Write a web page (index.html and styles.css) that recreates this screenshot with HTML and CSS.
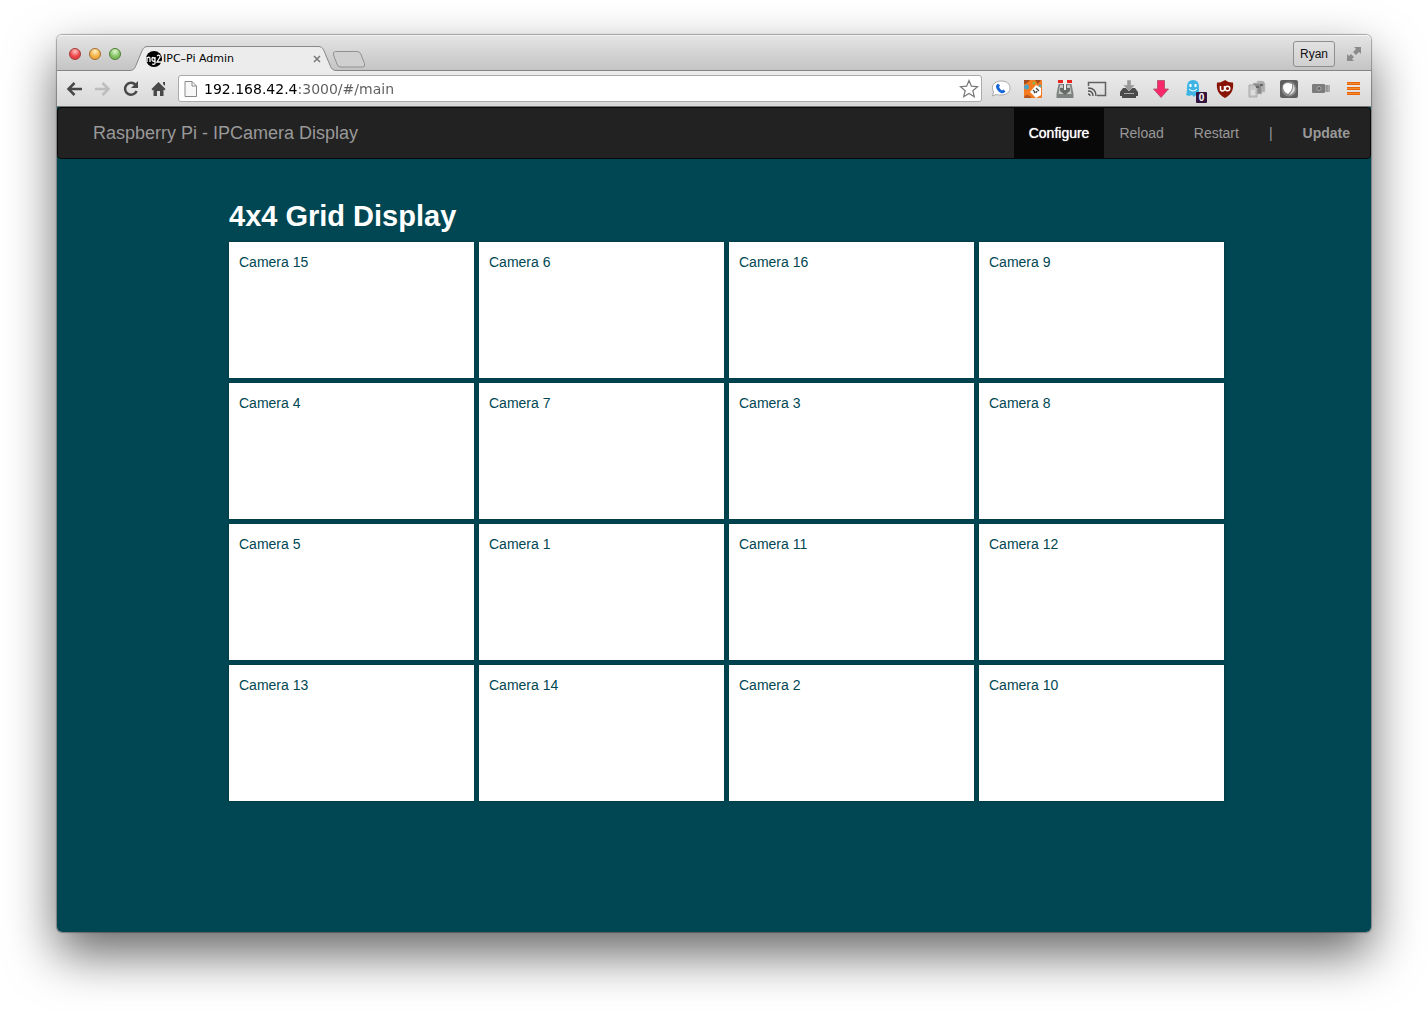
FILE: index.html
```html
<!DOCTYPE html>
<html lang="en">
<head>
<meta charset="utf-8">
<title>IPC-Pi Admin</title>
<link rel="stylesheet" href="styles.css">
</head>
<body>
<div class="window">
  <header class="titlebar">
    <div class="lights">
      <button class="light red" aria-label="Close"></button>
      <button class="light amber" aria-label="Minimize"></button>
      <button class="light green" aria-label="Zoom"></button>
    </div>
    <div class="tab">
      <svg class="tab-shape" viewBox="0 0 206 26" preserveAspectRatio="none" aria-hidden="true">
        <path d="M0 25.500C4 25 5 23 6 20L12 5C13.500 1.500 15 .5 18 .5H188C191 .5 192.500 1.500 194 5L200 20C201 23 202 25 206 25.500V26H0Z" fill="#ececec"/>
        <path d="M0 25.500C4 25 5 23 6 20L12 5C13.500 1.500 15 .5 18 .5H188C191 .5 192.500 1.500 194 5L200 20C201 23 202 25 206 25.500" fill="none" stroke="#858585"/>
      </svg>
      <svg class="favicon" viewBox="0 0 18 16" aria-hidden="true">
        <circle cx="9" cy="8" r="8"/>
        <path d="M2 11V6M2 7q3-2 3 1v3M10 6v6q0 2-3 1M10 8q-3-3-3 0t3 2M12 5q3-2 3 1l-3 5h5" fill="none" stroke="#fff" stroke-width="1.300"/>
      </svg>
      <span class="tab-title">IPC–Pi Admin</span>
      <button class="icon-button tab-close" aria-label="Close tab">
        <svg width="8" height="8" viewBox="0 0 8 8"><path d="M1 1l6 6M7 1L1 7" stroke="#777" stroke-width="1.500"/></svg>
      </button>
    </div>
    <button class="icon-button new-tab" aria-label="New tab">
      <svg width="34" height="17" viewBox="0 0 34 17"><path d="M3.500.5H25q3 0 4 3l3.500 9q1 3.500-2 3.500H9q-3 0-4-3L1.500 4q-1-3.500 2-3.500z" fill="#d0d0d0" stroke="#919191"/></svg>
    </button>
    <button class="profile">Ryan</button>
    <button class="icon-button" aria-label="Full screen">
      <svg width="16" height="16" viewBox="0 0 16 16"><path d="M8 1h7v7l-2-2-3 3-3-3 3-3zM1 8l2 2 2-2 3 3-2 2 2 2H1z" fill="#8b8b8b"/></svg>
    </button>
  </header>

  <div class="toolbar">
    <div class="controls">
      <button class="icon-button" aria-label="Back"><svg class="icon" viewBox="0 0 20 20"><path d="M17 10H4M9.500 4L3.500 10l6 6" fill="none" stroke="#484848" stroke-width="2.500"/></svg></button>
      <button class="icon-button" aria-label="Forward"><svg class="icon" viewBox="0 0 20 20"><path d="M2 10h13M9.500 4l6 6-6 6" fill="none" stroke="#bdbdbd" stroke-width="2.500"/></svg></button>
      <button class="icon-button" aria-label="Reload"><svg class="icon" viewBox="0 0 20 20"><path d="M14.500 5.700A6 6 0 1 0 15.600 12" fill="none" stroke="#484848" stroke-width="2.500"/><path d="M17 2v7h-7z" fill="#484848"/></svg></button>
      <button class="icon-button" aria-label="Home"><svg class="icon" viewBox="0 0 20 20"><path d="M9.500 3l7 7-1 1.500-1-1V17H11v-5H8v5H4.500v-6.500l-1 1L2.500 10zM14 3h2v4l-2-2z" fill="#484848"/></svg></button>
    </div>
    <form class="omnibox">
      <svg width="13" height="16" viewBox="0 0 13 16" aria-hidden="true"><path d="M1 .5h7l4.500 4.500v10.500H1zM8 .5V5h4.500" fill="#f8f8f8" stroke="#8a8a8a"/></svg>
      <input class="address" type="text" aria-label="Address" value="192.168.42.4:3000/#/main">
      <button class="icon-button" type="button" aria-label="Bookmark this page"><svg class="icon" viewBox="0 0 20 20"><path d="M10 1.500l2.400 5.700 6.100.5-4.700 4 1.500 6-5.300-3.200-5.300 3.200 1.500-6-4.700-4 6.100-.5z" fill="#fff" stroke="#777" stroke-width="1.200"/></svg></button>
    </form>
    <div class="extensions">
      <button class="icon-button" aria-label="Voice"><svg class="icon" viewBox="0 0 20 20"><path d="M10 2c6 0 9 3 9 7s-3 7-9 7c-2 0-4 0-5-.5L1.500 17 2.500 13C-.5 7 3 2 10 2z" fill="#fff" stroke="#aaa"/><path d="M7 4.500l2 2-1 1.500q1 2.500 3 3.500l1.500-1 2 2q-2 2.500-4.500 1.500-4-2-5-6-.5-2 2-3.500z" fill="#1766d8"/></svg></button>
      <button class="icon-button" aria-label="Tag tool"><svg class="icon" viewBox="0 0 20 20"><rect x="1" y="1" width="18" height="18" rx="1" fill="#f47b20"/><path d="M1 1h6Q4 5 1 5zM12 1h6l-3 4z" fill="#a54c19"/><circle cx="3.500" cy="8" r="2.500" fill="#4aa3c8"/><circle cx="11" cy="4" r="1.500" fill="#85b94b"/><circle cx="17" cy="7" r="1.500" fill="#5aa6b5"/><path d="M7 13l6-7 5 3v7l-5 3z" fill="#fff"/><path d="M10 11l2 2-1 1M13 9l3 3M14 12l-1 2" fill="none" stroke="#444" stroke-width="1.200"/><path d="M1 19q1-5 6-2l2 2z" fill="#b9561d"/></svg></button>
      <button class="icon-button" aria-label="Press"><svg class="icon" viewBox="0 0 20 20"><path d="M3.500 5h13l2 10v4h-17v-4z" fill="#7f837f"/><path d="M5 6h10l1.500 9h-13z" fill="#c4c7c4"/><path d="M8 4h4v5h3v3l-5 4-5-4V9h3z" fill="#686c68"/><path d="M9 5h2v6H9z" fill="#eee"/><path d="M3 1h5v3H3zM12 1h5v3h-5z" fill="#e8241d"/><path d="M8 1h4v4H8z" fill="#eee"/></svg></button>
      <button class="icon-button" aria-label="Cast"><svg class="icon" viewBox="0 0 20 20"><path d="M1.500 7V3.500h17v13H10" fill="none" stroke="#626262" stroke-width="1.500"/><path d="M1 9q8 0 8 8M1 12q5 0 5 5M1 15q2 0 2 2" fill="none" stroke="#555" stroke-width="1.400"/></svg></button>
      <button class="icon-button" aria-label="Downloads"><svg class="icon" viewBox="0 0 20 20"><path d="M4 9h12l3 4v4h-2v2H3v-2H1v-4z" fill="#4b4b4b"/><path d="M5 14h10v1H5z" fill="#aaa"/><path d="M8 1h4v5h4l-6 6-6-6h4z" fill="#999" stroke="#ddd" stroke-width=".5"/></svg></button>
      <button class="icon-button" aria-label="Download"><svg class="icon" viewBox="0 0 20 20"><path d="M6.500 1.500h7V10h4L10 18.500 2.500 10h4z" fill="#f8286a" stroke="#a84b62" stroke-width=".8"/></svg></button>
      <button class="icon-button ghost" aria-label="Trackers blocked: 0"><svg class="icon" viewBox="0 0 20 20"><path d="M4 8q0-7 6-7t6 7v10l-3-2-2 2-2-2-3 1-3-1q1-2 1-8z" fill="#3fb5e6"/><path d="M7.500 5v3M12.500 5v3" stroke="#fff" stroke-width="2"/><path d="M6 10q4 4 8 0" fill="none" stroke="#fff"/></svg><span class="badge">0</span></button>
      <button class="icon-button" aria-label="Shield"><svg class="icon" viewBox="0 0 20 20"><path d="M10 1q4 3 8 2.500c1 8-2 12-8 15.500C4 15.500 1 11.500 2 3.500 6 4 10 1 10 1z" fill="#881405"/><path d="M5.500 7v3q0 2 2 2t2-2V7" fill="none" stroke="#fff" stroke-width="1.500"/><circle cx="12.500" cy="9.500" r="2.300" fill="none" stroke="#fff" stroke-width="1.500"/></svg></button>
      <button class="icon-button" aria-label="Copies"><svg class="icon" viewBox="0 0 20 20"><path d="M10 2h6l2 2v9h-8z" fill="#a9a9a9" stroke="#c8c8c8" stroke-width=".7"/><path d="M6 4h6l3 3v8H6z" fill="#8c8c8c" stroke="#ccc" stroke-width=".7"/><path d="M2 6h5l3 3v9H2z" fill="#c7c7c7" stroke="#aaa"/><path d="M4 11h4v5H4z" fill="#ddd"/><path d="M9 7h3v2H9zM13 5h3v2h-3z" fill="#666"/></svg></button>
      <button class="icon-button" aria-label="Lens"><svg class="icon" viewBox="0 0 20 20"><rect x="1" y="1" width="18" height="18" rx="2" fill="#606060"/><circle cx="10" cy="10" r="7.500" fill="#888"/><path d="M4 7q1-3 5-3l4 1q1 6-4 10-5-2-5-8z" fill="#fff"/><path d="M14 5q5 8-4 11 5-5 4-11z" fill="#ddd"/></svg></button>
      <button class="icon-button" aria-label="Camera"><svg class="icon" viewBox="0 0 20 20"><rect x="1" y="5" width="13" height="9" rx="1" fill="#7c7c7c"/><path d="M14 6h5v7h-5z" fill="#aaa"/><circle cx="8" cy="9.500" r="2" fill="#666" stroke="#aaa"/><path d="M16 6v7" stroke="#888"/></svg></button>
      <button class="icon-button" aria-label="Menu"><svg class="icon" viewBox="0 0 20 20"><path d="M4 4.500h13M4 9.500h13M4 14.500h13" stroke="#e8630a" stroke-width="3"/><path d="M4 4.500h13M4 9.500h13M4 14.500h13" stroke="#f58a28"/></svg></button>
    </div>
  </div>

  <div class="page">
    <nav class="navbar">
      <a class="brand" href="#/main">Raspberry Pi - IPCamera Display</a>
      <div class="links">
        <a class="link active" href="#/configure">Configure</a>
        <a class="link" href="#/reload">Reload</a>
        <a class="link" href="#/restart">Restart</a>
        <span class="link">|</span>
        <a class="link strong" href="#/update">Update</a>
      </div>
    </nav>
    <main class="content">
      <h1 class="heading">4x4 Grid Display</h1>
      <ul class="grid">
        <li class="camera">Camera 15</li><li class="camera">Camera 6</li><li class="camera">Camera 16</li><li class="camera">Camera 9</li>
        <li class="camera">Camera 4</li><li class="camera">Camera 7</li><li class="camera">Camera 3</li><li class="camera">Camera 8</li>
        <li class="camera">Camera 5</li><li class="camera">Camera 1</li><li class="camera">Camera 11</li><li class="camera">Camera 12</li>
        <li class="camera">Camera 13</li><li class="camera">Camera 14</li><li class="camera">Camera 2</li><li class="camera">Camera 10</li>
      </ul>
    </main>
  </div>
</div>
</body>
</html>
```

FILE: styles.css
```css
* { box-sizing: border-box; }

body {
  margin: 0;
  min-height: 100vh;
  padding: 35px 57px 79px;
  display: flex;
  background: #fff;
  font: 14px/20px "Liberation Sans", Arial, sans-serif;
}

button { font: inherit; }

.window {
  flex: 1;
  min-width: 0;
  display: flex;
  flex-direction: column;
  border-radius: 5px;
  box-shadow: 0 0 1px 1px rgba(0, 0, 0, .3), 0 22px 50px rgba(0, 0, 0, .6);
}

.icon-button {
  display: flex;
  padding: 0;
  border: 0;
  background: none;
}

.icon { width: 20px; height: 20px; }

/* Title bar */
.titlebar {
  height: 36px;
  display: flex;
  align-items: center;
  padding: 2px 9px 0 12px;
  border-top: 1px solid #f4f4f4;
  border-bottom: 1px solid #858585;
  border-radius: 5px 5px 0 0;
  background: linear-gradient(#e4e4e4, #c4c4c4);
}

.lights { display: flex; gap: 8px; }

.light {
  width: 12px;
  height: 12px;
  padding: 0;
  border: 1px solid;
  border-radius: 50%;
}

.red { border-color: #a33a38; background: radial-gradient(circle at 50% 25%, #ffc5c2, #ee484b 55%, #d9343a); }
.amber { border-color: #a56a2b; background: radial-gradient(circle at 50% 25%, #fff0c4, #f3b347 55%, #e9982b); }
.green { border-color: #4d7d35; background: radial-gradient(circle at 50% 25%, #e2f6d2, #86c466 55%, #68ae49); }

.tab {
  position: relative;
  align-self: flex-end;
  width: 206px;
  height: 25px;
  margin: 0 -4px -1px 9px;
  padding: 0 15px;
  display: flex;
  align-items: center;
}

.tab-shape {
  position: absolute;
  inset: 0;
  width: 100%;
  height: 100%;
}

.favicon, .tab-title, .tab-close { position: relative; }
.favicon { width: 18px; height: 16px; }
.tab-title { flex: 1; font: 11px/16px "DejaVu Sans", sans-serif; color: #000; }

.new-tab { margin-top: 10px; }

.profile {
  height: 26px;
  margin: 0 11px 0 auto;
  padding: 0 6px;
  border: 1px solid #8e8e8e;
  border-radius: 3px;
  background: linear-gradient(#e2e2e2, #d0d0d0);
  font-size: 12px;
  color: #111;
}

/* Toolbar */
.toolbar {
  height: 36px;
  display: flex;
  align-items: center;
  gap: 9px;
  padding: 0 8px;
  border-bottom: 1px solid #777;
  background: linear-gradient(#ececec, #d8d8d8);
}

.controls { display: flex; gap: 8px; }
.extensions { display: flex; gap: 12px; }

.omnibox {
  flex: 1;
  min-width: 0;
  height: 27px;
  display: flex;
  align-items: center;
  padding: 0 2px 0 5px;
  border: 1px solid #aaa;
  border-radius: 3px;
  background: #fff;
}

.address {
  flex: 1;
  min-width: 0;
  height: 22px;
  padding: 0;
  margin-left: 7px;
  border: 0;
  font: 14px/20px "DejaVu Sans", sans-serif;
  color: transparent;
  background: linear-gradient(90deg, #000 94px, #5c5c5c 94px);
  -webkit-background-clip: text;
  background-clip: text;
}

.ghost { position: relative; }

.badge {
  position: absolute;
  right: -4px;
  bottom: -4px;
  width: 11px;
  height: 11px;
  border-radius: 1px;
  background: #33133c;
  font: bold 10px/11px "Liberation Sans", Arial, sans-serif;
  text-align: center;
  color: #fff;
}

/* Page */
.page {
  flex: 1;
  border-radius: 0 0 5px 5px;
  background: #004753;
}

.navbar {
  display: flex;
  justify-content: space-between;
  padding: 0 5px 0 35px;
  border: 1px solid #080808;
  border-radius: 4px;
  background: #222;
}

.brand {
  padding: 15px 0;
  font-size: 18px;
  color: #999;
  text-decoration: none;
}

.links { display: flex; }

.link {
  padding: 15px;
  color: #999;
  text-decoration: none;
}

.active {
  background: #080808;
  color: #fff;
  text-shadow: 0 0 1px #fff;
}

.strong { font-weight: bold; }

.content {
  max-width: 1020px;
  margin: 0 auto;
  padding: 40px 0 40px 25px;
}

.heading {
  margin: 0 0 9px;
  font-size: 29px;
  line-height: 34px;
  color: #fff;
}

.grid {
  display: grid;
  grid-template-columns: repeat(4, 1fr);
  grid-auto-rows: 136px;
  gap: 5px;
  margin: 0;
  padding: 0;
  list-style: none;
}

.camera {
  padding: 10px;
  background: #fff;
  color: #004753;
  box-shadow: 0 0 3px rgba(0, 0, 0, .3);
}
```
